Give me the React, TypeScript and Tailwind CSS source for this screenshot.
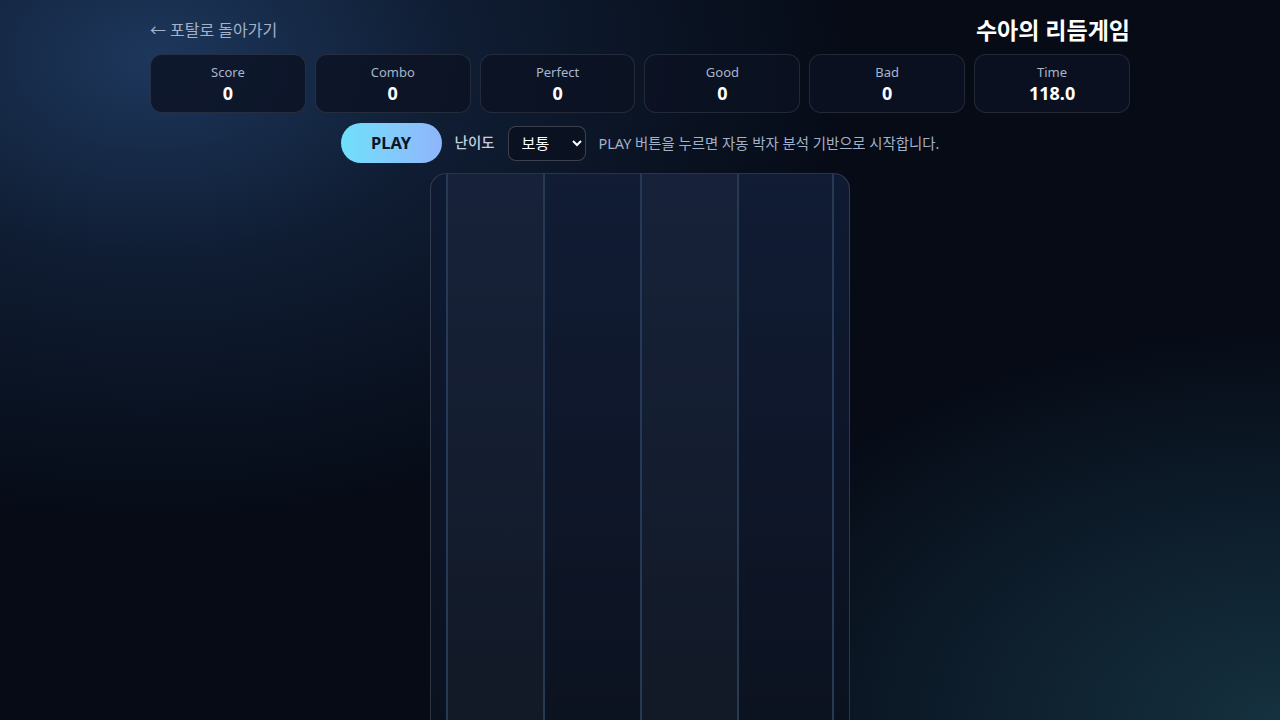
import { useState } from "react";

const stats = [
  { label: "Score", value: "0" },
  { label: "Combo", value: "0" },
  { label: "Perfect", value: "0" },
  { label: "Good", value: "0" },
  { label: "Bad", value: "0" },
  { label: "Time", value: "118.0" },
];

const lanes = [0, 1, 2, 3];

const StatCard = ({ label, value }: { label: string; value: string }) => (
  <div className="h-[59px] rounded-xl border border-white/10 bg-[#0b1222]/80 flex flex-col items-center justify-center pt-[1px]">
    <p className="text-[13px] leading-4 text-[#a8b6cc]">{label}</p>
    <p className="mt-[1px] text-[18px] leading-6 font-bold text-white">{value}</p>
  </div>
);

const App = () => {
  const [level, setLevel] = useState("normal");

  return (
    <div
      className="min-h-screen bg-fixed bg-[#060b16] bg-[radial-gradient(ellipse_55%_65%_at_12%_8%,#1d375c_0%,rgba(22,42,72,0.55)_45%,transparent_100%),radial-gradient(ellipse_48%_55%_at_100%_100%,#15313f_0%,rgba(20,45,62,0.55)_50%,transparent_100%)]"
      style={{ fontFamily: '"Noto Sans", "Noto Sans CJK KR", sans-serif' }}
    >
      <div className="max-w-[980px] mx-auto pt-[16px]">
        <header className="flex items-center justify-between h-[28px]">
          <a href="#" className="text-[16px] text-[#a3b2ca] flex items-center gap-1">
            <span>←</span>
            <span>포탈로 돌아가기</span>
          </a>
          <h1 className="text-[23px] font-bold text-white">수아의 리듬게임</h1>
        </header>

        <div className="mt-[10px] grid grid-cols-6 gap-[9px]">
          {stats.map((s) => (
            <StatCard key={s.label} label={s.label} value={s.value} />
          ))}
        </div>

        <div className="mt-[10px] flex items-center justify-center gap-[13px]">
          <button className="w-[101px] h-[40px] rounded-full bg-gradient-to-r from-[#6ee0fb] to-[#8fb5fb] text-[16.5px] font-bold text-[#0b1526]">
            PLAY
          </button>
          <span className="text-[14.5px] font-medium text-[#c4cfdf]">난이도</span>
          <select
            value={level}
            onChange={(e) => setLevel(e.target.value)}
            className="w-[78px] h-[35px] rounded-lg border border-white/20 bg-[#0a1120] text-white text-[15px] pl-[9px] pr-1"
          >
            <option value="easy">쉬움</option>
            <option value="normal">보통</option>
            <option value="hard">어려움</option>
          </select>
          <p className="pt-[2px] text-[14.4px] text-[#a3b2ca]">
            PLAY 버튼을 누르면 자동 박자 분석 기반으로 시작합니다.
          </p>
        </div>

        <div className="mt-[10px] mx-auto w-[420px] h-[620px] rounded-t-2xl border border-white/15 bg-gradient-to-b from-[#0f1a33] to-[#0a101c] px-[15px] overflow-hidden">
          <div className="grid grid-cols-4 h-full">
            {lanes.map((i) => (
              <div
                key={i}
                className={
                  "h-full border-l-2 border-[#283955] " +
                  (i === 3 ? "border-r-2 " : "") +
                  (i % 2 === 0
                    ? "bg-gradient-to-b from-[#17223a] to-[#111824]"
                    : "bg-gradient-to-b from-[#111c35] to-[#0b111d]")
                }
              />
            ))}
          </div>
        </div>
      </div>
    </div>
  );
};

export default App;
